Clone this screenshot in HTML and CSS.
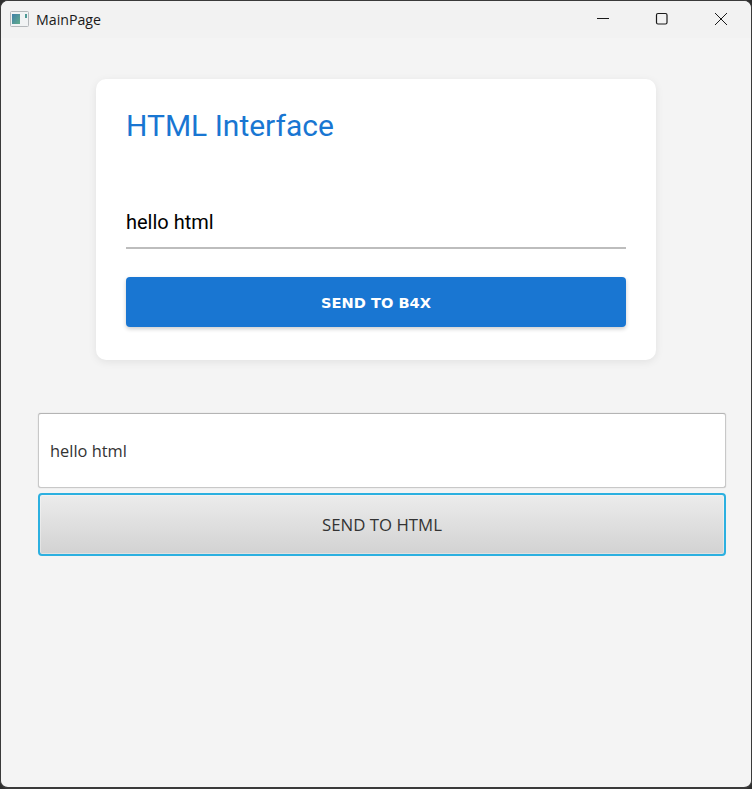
FILE: index.html
```html
<!DOCTYPE html>
<html lang="en">
<head>
    <meta charset="UTF-8">
    <meta name="viewport" content="width=device-width, initial-scale=1.0">
    <title>MainPage</title>
    <link rel="stylesheet" href="styles.css">
</head>
<body>
    <div class="window">
        <div class="titlebar">
            <svg class="app-icon" width="20" height="16" viewBox="0 0 20 16">
                <defs>
                    <linearGradient id="appFill" x1="0" y1="0" x2="1" y2="1">
                        <stop offset="0" stop-color="#3f7fa8"/>
                        <stop offset="1" stop-color="#62ad8c"/>
                    </linearGradient>
                </defs>
                <rect x="0.5" y="0.5" width="18" height="15" rx="1" fill="#f1f3f4" stroke="#b4b8bb"/>
                <rect x="2" y="3" width="8" height="10" fill="url(#appFill)"/>
                <rect x="15" y="3" width="2" height="4" fill="#4f9a96"/>
            </svg>
            <span class="window-title">MainPage</span>
            <div class="controls">
                <svg class="control" width="14" height="14" viewBox="0 0 14 14"><path d="M1 6.5H13" stroke="#1a1a1a" fill="none"/></svg>
                <svg class="control" width="14" height="14" viewBox="0 0 14 14"><rect x="1.5" y="1.5" width="10.5" height="10.5" rx="1.5" stroke="#1a1a1a" stroke-width="1.2" fill="none"/></svg>
                <svg class="control" width="14" height="14" viewBox="0 0 14 14"><path d="M1 1L13 13M13 1L1 13" stroke="#1a1a1a" fill="none"/></svg>
            </div>
        </div>

        <div class="content">
            <div class="card">
                <h2>HTML Interface</h2>
                <input type="text" class="web-input" value="hello html">
                <button type="button" class="web-btn">SEND TO B4X</button>
            </div>

            <div class="native-section">
                <input type="text" class="native-input" value="hello html">
                <button type="button" class="native-btn">SEND TO HTML</button>
            </div>
        </div>
    </div>
</body>
</html>
```

FILE: styles.css
```css
* {
    margin: 0;
    padding: 0;
    box-sizing: border-box;
}

body {
    width: 752px;
    height: 789px;
    background: #2e2e2e;
    overflow: hidden;
}

.window {
    height: 789px;
    display: flex;
    flex-direction: column;
    background: #f4f4f4;
    border: 1px solid #3a3a3a;
    border-bottom-width: 2px;
    border-radius: 8px;
    overflow: hidden;
}

.titlebar {
    height: 37px;
    flex-shrink: 0;
    display: flex;
    align-items: center;
    padding-left: 9px;
    background: #f2f2f2;
}

.app-icon {
    margin-right: 6px;
    margin-top: -1px;
}

.window-title {
    font-family: "Open Sans", sans-serif;
    font-size: 14.2px;
    color: #1a1a1a;
}

.controls {
    margin-left: auto;
    display: flex;
    gap: 45px;
    padding-right: 23px;
    margin-top: -1px;
}

.control {
    display: block;
}

.content {
    padding-top: 41px;
}

.card {
    width: 560px;
    height: 281px;
    margin-left: 95px;
    padding: 31px 30px 30px;
    background: white;
    border-radius: 10px;
    box-shadow: 0 2px 8px rgba(0, 0, 0, 0.08);
}

h2 {
    font-family: Roboto, sans-serif;
    font-size: 30px;
    font-weight: 400;
    line-height: 32px;
    color: #1976d2;
}

.web-input {
    display: block;
    width: 100%;
    height: 50px;
    margin-top: 57px;
    padding-bottom: 2px;
    border: none;
    border-bottom: 2px solid #bdbdbd;
    outline: none;
    background: transparent;
    font-family: Roboto, sans-serif;
    font-size: 20px;
    color: black;
}

.web-btn {
    display: block;
    width: 100%;
    height: 50px;
    margin-top: 28px;
    background: #1976d2;
    color: white;
    border: none;
    border-radius: 4px;
    box-shadow: 0 2px 4px rgba(0, 0, 0, 0.2);
    font-family: "DejaVu Sans", sans-serif;
    font-size: 14.6px;
    font-weight: 700;
}

.native-section {
    margin: 53px 25px 0 37px;
    display: flex;
    flex-direction: column;
    gap: 5px;
}

.native-input {
    height: 75px;
    padding: 0 11px;
    background: white;
    border: 1px solid #c8c8c8;
    border-top-color: #b4b4b4;
    border-radius: 3px;
    box-shadow: 0 0 1px rgba(0, 0, 0, 0.25);
    outline: none;
    font-family: "Open Sans", sans-serif;
    font-size: 16.4px;
    color: #333;
}

.native-btn {
    height: 63px;
    background: linear-gradient(#ececec, #d2d2d2);
    border: 2px solid #2cb0e0;
    border-radius: 4px;
    box-shadow: inset 0 0 0 1px rgba(255, 255, 255, 0.35);
    font-family: "Open Sans", sans-serif;
    font-size: 16.8px;
    color: #333;
}
```
